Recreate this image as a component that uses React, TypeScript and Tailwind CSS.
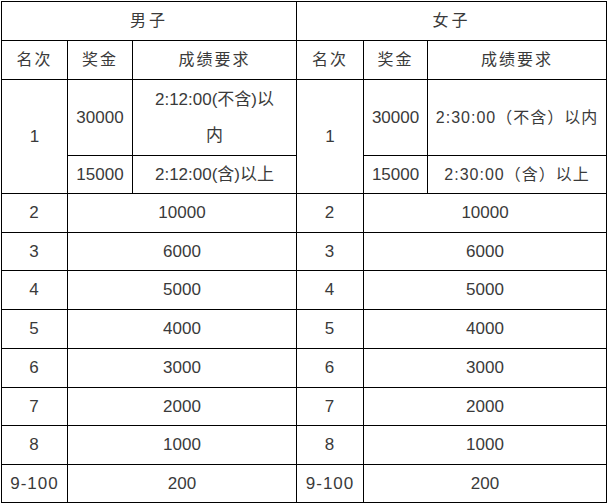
const ranks = [
  { rank: "2", prize: "10000", h: "h-[39px]" },
  { rank: "3", prize: "6000", h: "h-[38px]" },
  { rank: "4", prize: "5000", h: "h-[39px]" },
  { rank: "5", prize: "4000", h: "h-[39px]" },
  { rank: "6", prize: "3000", h: "h-[39px]" },
  { rank: "7", prize: "2000", h: "h-[38px]" },
  { rank: "8", prize: "1000", h: "h-[39px]" },
  { rank: "9-100", prize: "200", h: "h-[38px]" },
];

const cell = "border border-black text-center align-middle p-0";

export default function App() {
  return (
    <div
      className="bg-white w-[608px] h-[504px] pl-px pt-px text-[17px] text-[#3a3a3a]"
      style={{ fontFamily: '"Liberation Sans", "Noto Sans CJK SC", sans-serif' }}
    >
      <table className="table-fixed border-collapse w-[605px]">
        <colgroup>
          <col className="w-[66px]" />
          <col className="w-[65px]" />
          <col className="w-[164px]" />
          <col className="w-[67px]" />
          <col className="w-[64px]" />
          <col className="w-[179px]" />
        </colgroup>
        <tbody>
          {/* 组别 */}
          <tr className="h-[39px] text-[16px]">
            <td colSpan={3} className={`${cell} tracking-[3px]`}>男子</td>
            <td colSpan={3} className={`${cell} tracking-[3px]`}>女子</td>
          </tr>
          {/* 表头 */}
          <tr className="h-[39px] text-[16px] tracking-[2px]">
            <td className={cell}>名次</td>
            <td className={cell}>奖金</td>
            <td className={cell}>成绩要求</td>
            <td className={cell}>名次</td>
            <td className={cell}>奖金</td>
            <td className={cell}>成绩要求</td>
          </tr>
          {/* 第一名 */}
          <tr className="h-[76px]">
            <td rowSpan={2} className={cell}>1</td>
            <td className={cell}>30000</td>
            <td className={`${cell} leading-[36px]`}>
              2:12:00(不含)以
              <br />内
            </td>
            <td rowSpan={2} className={cell}>1</td>
            <td className={cell}>30000</td>
            <td className={`${cell} text-[16px] tracking-[1px]`}>2:30:00（不含）以内</td>
          </tr>
          <tr className="h-[38px]">
            <td className={cell}>15000</td>
            <td className={cell}>2:12:00(含)以上</td>
            <td className={cell}>15000</td>
            <td className={`${cell} text-[16px] tracking-[1px]`}>2:30:00（含）以上</td>
          </tr>
          {ranks.map((r) => (
            <tr key={r.rank} className={r.h}>
              <td className={`${cell} tracking-[1px]`}>{r.rank}</td>
              <td colSpan={2} className={cell}>{r.prize}</td>
              <td className={`${cell} tracking-[1px]`}>{r.rank}</td>
              <td colSpan={2} className={cell}>{r.prize}</td>
            </tr>
          ))}
        </tbody>
      </table>
    </div>
  );
}
